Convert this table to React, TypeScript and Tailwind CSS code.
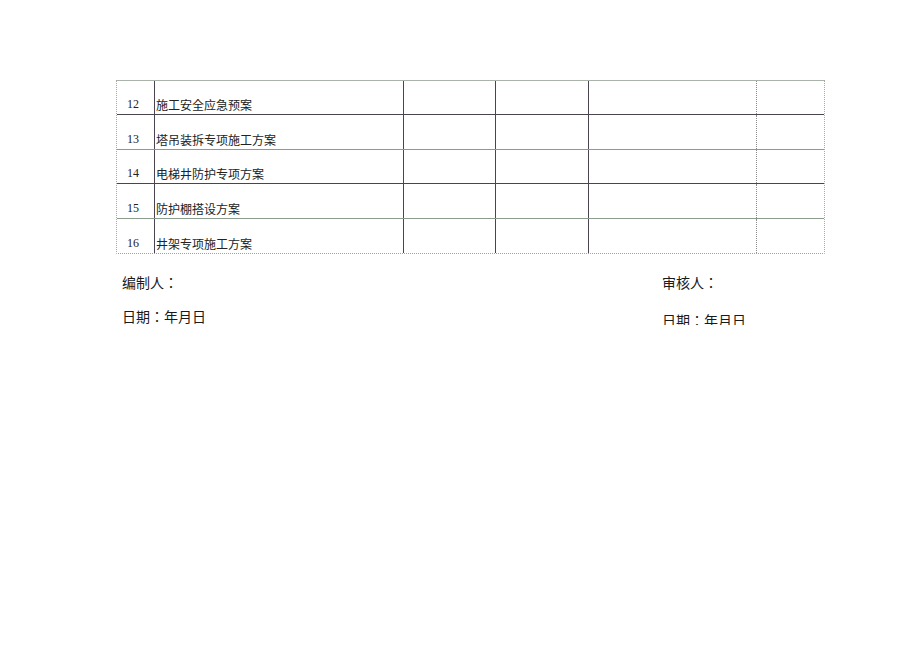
const rows = [
  { no: "12", name: "施工安全应急预案", h: "h-[34px]", line: "border-t-[#8f9a8f]" },
  { no: "13", name: "塔吊装拆专项施工方案", h: "h-[35px]", line: "border-t-[#4a4450]" },
  { no: "14", name: "电梯井防护专项方案", h: "h-[34px]", line: "border-t-[#8c9c8c]" },
  { no: "15", name: "防护棚搭设方案", h: "h-[35px]", line: "border-t-[#4a4450]" },
  { no: "16", name: "井架专项施工方案", h: "h-[35px]", line: "border-t-[#8c9c8c]" },
]

const cjk = "font-['Noto_Sans_CJK_JP','Noto_Sans_CJK_SC',sans-serif]"

function Row({ row }: { row: (typeof rows)[number] }) {
  return (
    <div className={`grid grid-cols-[37px_249px_92px_93px_168px_69px] border-t ${row.line} ${row.h}`}>
      <div className="flex items-end pb-[3px] pl-[10px] font-['Liberation_Serif',serif] text-[12px] leading-[14px] text-[#222]">
        {row.no}
      </div>
      <div className={`flex items-end border-l border-l-[#4a4450] pb-[2px] pl-[1px] ${cjk} text-[12px] leading-[14px] text-[#222]`}>
        {row.name}
      </div>
      <div className="border-l border-l-[#4a4450]" />
      <div className="border-l border-l-[#4a4450]" />
      <div className="border-l border-l-[#4a4450]" />
      <div className="border-l border-dotted border-l-[#8a8a8a]" />
    </div>
  )
}

export default function App() {
  return (
    <div className="min-h-[651px] w-[920px] bg-white pt-[80px] pl-[116px]">
      <div className="w-[709px] border-x border-b border-dotted border-x-[#a8a8a8] border-b-[#9aa69a] [&>div:first-child]:border-t-[#a9b3a9]">
        {rows.map((row) => (
          <Row key={row.no} row={row} />
        ))}
      </div>

      <div className={`mt-[18px] grid grid-cols-[546px_200px] ${cjk} text-[14px] leading-[20px] text-[#1a1a1a]`}>
        <div className="pl-[6px]">
          <p>编制人：</p>
          <p className="mt-[14px]">日期：年月日</p>
        </div>
        <div>
          <p>审核人：</p>
          {/* the reference page cuts this line off at its lower edge */}
          <div className="mt-[18px] h-[15px] overflow-hidden">
            <p>日期：年月日</p>
          </div>
        </div>
      </div>
    </div>
  )
}
